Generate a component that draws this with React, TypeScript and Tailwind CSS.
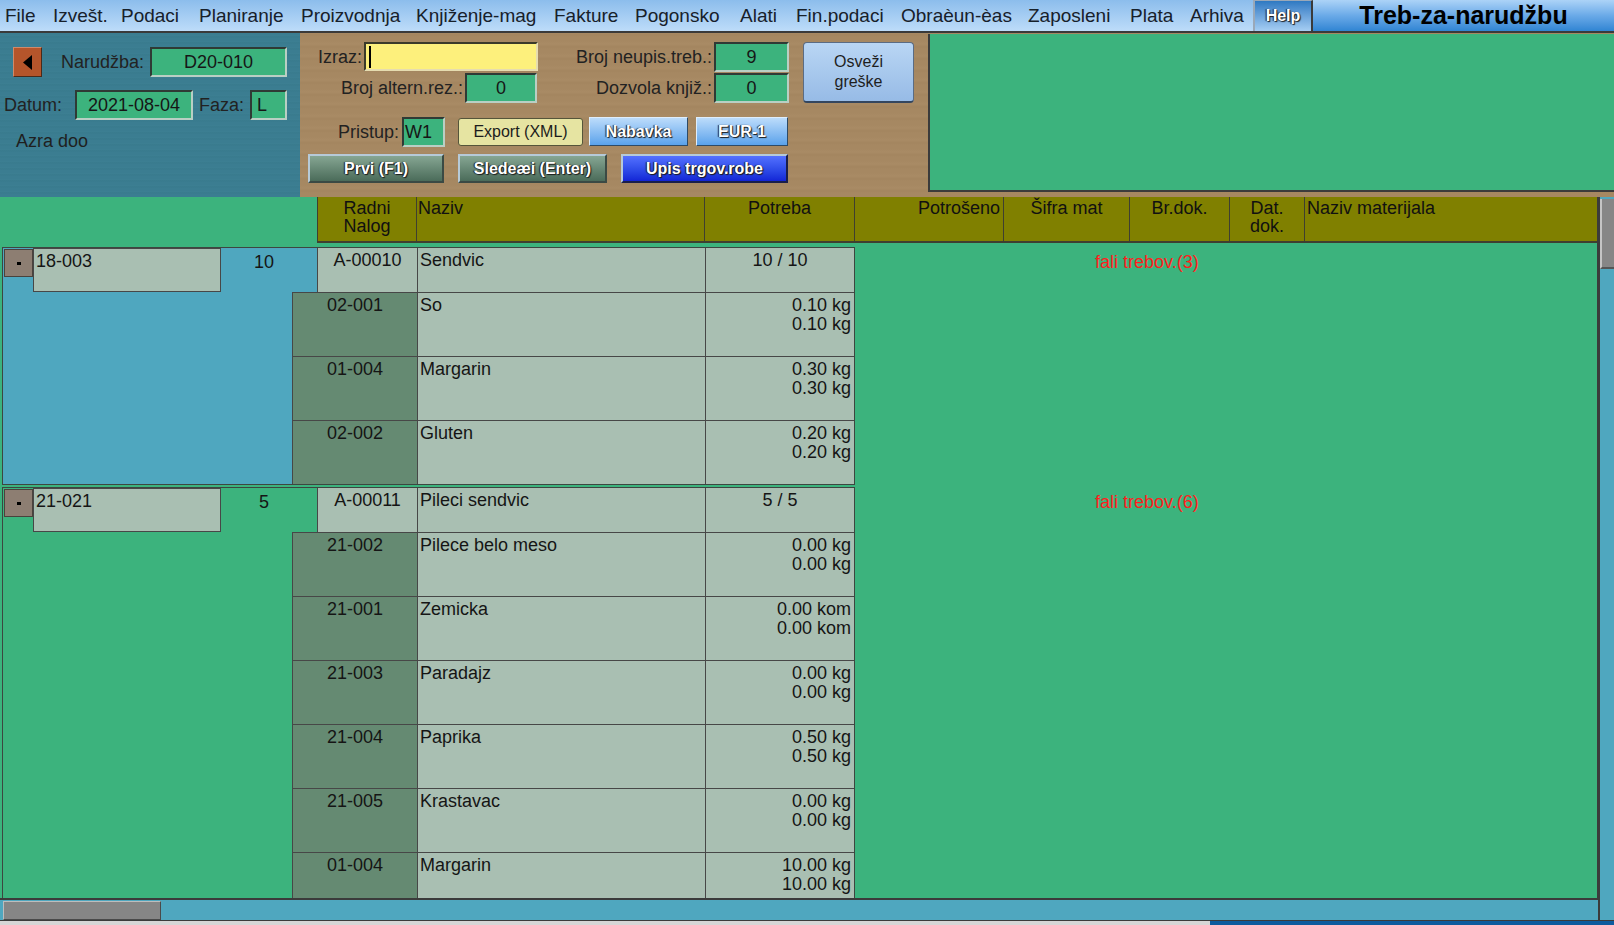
import React from "react";

const menu = [
  { label: "File", w: 48 },
  { label: "Izvešt.", w: 68 },
  { label: "Podaci", w: 78 },
  { label: "Planiranje", w: 102 },
  { label: "Proizvodnja", w: 115 },
  { label: "Knjiženje-mag", w: 138 },
  { label: "Fakture", w: 81 },
  { label: "Pogonsko", w: 105 },
  { label: "Alati", w: 56 },
  { label: "Fin.podaci", w: 105 },
  { label: "Obraèun-èas", w: 127 },
  { label: "Zaposleni", w: 102 },
  { label: "Plata", w: 60 },
  { label: "Arhiva", w: 63 },
];

interface Material {
  code: string;
  name: string;
  qty: string;
}

interface Order {
  id: string;
  qty: string;
  code: string;
  name: string;
  need: string;
  note: string;
  selected: boolean;
  materials: Material[];
}

const orders: Order[] = [
  {
    id: "18-003",
    qty: "10",
    code: "A-00010",
    name: "Sendvic",
    need: "10 / 10",
    note: "fali trebov.(3)",
    selected: true,
    materials: [
      { code: "02-001", name: "So", qty: "0.10 kg" },
      { code: "01-004", name: "Margarin", qty: "0.30 kg" },
      { code: "02-002", name: "Gluten", qty: "0.20 kg" },
    ],
  },
  {
    id: "21-021",
    qty: "5",
    code: "A-00011",
    name: "Pileci sendvic",
    need: "5 / 5",
    note: "fali trebov.(6)",
    selected: false,
    materials: [
      { code: "21-002", name: "Pilece belo meso", qty: "0.00 kg" },
      { code: "21-001", name: "Zemicka", qty: "0.00 kom" },
      { code: "21-003", name: "Paradajz", qty: "0.00 kg" },
      { code: "21-004", name: "Paprika", qty: "0.50 kg" },
      { code: "21-005", name: "Krastavac", qty: "0.00 kg" },
      { code: "01-004", name: "Margarin", qty: "10.00 kg" },
    ],
  },
];

// sunken green field
function Field({ className = "", children }: { className?: string; children?: React.ReactNode }) {
  return (
    <div
      className={`h-[30px] flex items-center bg-[#3cb37d] border-2 border-t-[#2f3a35] border-l-[#2f3a35] border-b-[#b9cfc4] border-r-[#b9cfc4] text-[18px] leading-none text-[#161616] ${className}`}
    >
      {children}
    </div>
  );
}

function Label({ className = "", children }: { className?: string; children: React.ReactNode }) {
  return <span className={`text-[18px] leading-none text-[#222] whitespace-nowrap ${className}`}>{children}</span>;
}

function Header({ className = "", children }: { className?: string; children: React.ReactNode }) {
  return (
    <div className={`h-[46px] bg-[#808000] border-r border-b-2 border-[#3f3f30] pt-[2px] text-[18px] leading-[18px] text-[#111] ${className}`}>
      {children}
    </div>
  );
}

function OrderGroup({ order, first }: { order: Order; first: boolean }) {
  const bg = order.selected ? "bg-[#4fa7bf]" : "bg-[#3cb37d]";
  return (
    <div className={`flex items-start ${first ? "" : "mt-[2px]"}`}>
      <div className={`w-[853px] ml-[2px] border border-[#3d4640] ${bg}`}>
        {/* main row */}
        <div className="flex h-[44px]">
          <div className="w-[30px] pt-[1px] pl-[1px]">
            <div className="w-[29px] h-[28px] bg-[#8d7e72] border border-[#4a423c] flex items-center justify-center">
              <span className="w-[4px] h-[3px] bg-black" />
            </div>
          </div>
          <div className="w-[188px] h-[44px] bg-[#a9bfb2] border border-[#474747] pl-[2px] pt-[3px] text-[18px] leading-[19px] text-[#151515]">
            {order.id}
          </div>
          <div className="w-[96px] pr-[10px] pt-[5px] text-center text-[18px] leading-[19px] text-[#151515]">{order.qty}</div>
          <div className="w-[100px] bg-[#a9bfb2] border-l border-[#474747] pt-[3px] text-center text-[18px] leading-[19px] text-[#151515]">
            {order.code}
          </div>
          <div className="w-[288px] bg-[#a9bfb2] border-l border-[#474747] pl-[2px] pt-[3px] text-[18px] leading-[19px] text-[#151515]">
            {order.name}
          </div>
          <div className="w-[149px] bg-[#a9bfb2] border-l border-[#474747] pt-[3px] text-center text-[18px] leading-[19px] text-[#151515]">
            {order.need}
          </div>
        </div>
        {order.materials.map((m, i) => (
          <div key={m.code + i} className="flex h-[64px]">
            <div className="w-[289px]" />
            <div className="w-[125px] bg-[#658a72] border-l border-t border-[#474747] pt-[3px] text-center text-[18px] leading-[19px] text-[#151515]">
              {m.code}
            </div>
            <div className="w-[288px] bg-[#a9bfb2] border-l border-t border-[#474747] pl-[2px] pt-[3px] text-[18px] leading-[19px] text-[#151515]">
              {m.name}
            </div>
            <div className="w-[149px] bg-[#a9bfb2] border-l border-t border-[#474747] pr-[3px] pt-[3px] text-right text-[18px] leading-[19px] text-[#151515]">
              <div>{m.qty}</div>
              <div>{m.qty}</div>
            </div>
          </div>
        ))}
      </div>
      <div className="pl-[240px] pt-[6px] text-[18px] leading-[19px] text-[#ff1d1d] whitespace-nowrap">{order.note}</div>
    </div>
  );
}

export default function App() {
  const btnShadow = "[text-shadow:1px_1px_1px_#1a1a1a,-1px_0_1px_#1a1a1a]";
  return (
    <div className="w-full h-[925px] overflow-hidden flex flex-col bg-[#3cb37d] font-['Liberation_Sans',Arial,sans-serif]">
      {/* Menu bar */}
      <div className="h-[33px] flex border-b-2 border-[#3a3a3a] shrink-0">
        <div className="flex items-center pl-[5px] w-[1253px] bg-gradient-to-b from-[#8cbdec] to-[#bddcf9]">
          {menu.map(m => (
            <span key={m.label} style={{ width: m.w }} className="text-[19px] leading-none text-[#17202a] whitespace-nowrap">
              {m.label}
            </span>
          ))}
        </div>
        <div className="w-[60px] flex items-center justify-center bg-gradient-to-b from-[#2e79c2] to-[#a6cef3] border-l-2 border-t border-[#9aa8b8] border-r-2 border-r-[#3a3a3a]">
          <span className={`text-[16px] font-bold text-white leading-none ${btnShadow}`}>Help</span>
        </div>
        <div className="flex-1 flex items-center justify-center bg-gradient-to-b from-[#acd3f7] via-[#6aaae8] to-[#2f85d3]">
          <span className="text-[25px] font-bold text-black leading-none">Treb-za-narudžbu</span>
        </div>
      </div>

      {/* Top panel */}
      <div className="h-[164px] flex shrink-0">
        <div className="w-[300px] bg-[#3b7d91] bg-[repeating-linear-gradient(0deg,#3b7d91_0px,#3b7d91_3px,#387a8d_4px,#3d8094_6px)] pt-[14px]">
          <div className="flex items-center h-[30px]">
            <div className="ml-[13px] w-[29px] h-[30px] bg-[#b5552b] border border-t-[#d08a6a] border-l-[#d08a6a] border-b-[#4a2a1a] border-r-[#4a2a1a] flex items-center justify-center">
              <svg width="9" height="15" viewBox="0 0 9 15">
                <polygon points="9,0 9,15 0,7.5" fill="#000" />
              </svg>
            </div>
            <Label className="w-[108px] text-right pr-[6px]">Narudžba:</Label>
            <Field className="w-[137px] justify-center">D20-010</Field>
          </div>
          <div className="flex items-center h-[30px] mt-[13px]">
            <Label className="w-[75px] pl-[4px]">Datum:</Label>
            <Field className="w-[118px] justify-center">2021-08-04</Field>
            <Label className="w-[57px] pl-[6px]">Faza:</Label>
            <Field className="w-[37px] pl-[5px]">L</Field>
          </div>
          <div className="mt-[11px] pl-[16px] text-[18px] leading-[20px] text-[#1f1f1f]">Azra doo</div>
        </div>

        <div className="flex-1 flex bg-[#a68862] bg-[repeating-linear-gradient(0deg,#a68862_0px,#a68862_4px,#a3855f_6px,#a98b65_9px,#a68862_12px)]">
          <div className="w-[489px] flex flex-col pt-[9px]">
            <div className="flex items-center h-[29px]">
              <Label className="w-[64px] text-right pr-[2px]">Izraz:</Label>
              <div className="w-[174px] h-[29px] bg-[#fdf07c] border-2 border-t-[#3a3a2a] border-l-[#3a3a2a] border-b-[#e6dcb0] border-r-[#e6dcb0] flex items-center pl-[3px]">
                <span className="w-[2px] h-[22px] bg-black" />
              </div>
              <Label className="w-[176px] text-right pr-[2px]">Broj neupis.treb.:</Label>
              <Field className="w-[75px] h-[29px] justify-center">9</Field>
            </div>
            <div className="flex items-center h-[29px] mt-[2px]">
              <Label className="w-[165px] text-right pr-[2px]">Broj altern.rez.:</Label>
              <Field className="w-[72px] h-[29px] justify-center">0</Field>
              <Label className="w-[177px] text-right pr-[2px]">Dozvola knjiž.:</Label>
              <Field className="w-[75px] h-[29px] justify-center">0</Field>
            </div>
            <div className="flex items-center h-[29px] mt-[15px]">
              <Label className="w-[102px] text-right pr-[3px]">Pristup:</Label>
              <Field className="w-[43px] h-[29px] pl-[1px]">W1</Field>
              <div className="ml-[13px] w-[125px] h-[28px] rounded-[3px] bg-[#e6e4a2] border border-[#55553a] flex items-center justify-center text-[16px] leading-none text-[#1c1c1c]">
                Export (XML)
              </div>
              <div className={`ml-[6px] w-[99px] h-[29px] bg-gradient-to-b from-[#bcdcfb] to-[#5aa2ea] border border-t-[#dfeefc] border-l-[#dfeefc] border-b-[#2d4a66] border-r-[#2d4a66] flex items-center justify-center text-[16px] font-bold leading-none text-white ${btnShadow}`}>
                Nabavka
              </div>
              <div className={`ml-[8px] w-[92px] h-[29px] bg-gradient-to-b from-[#bcdcfb] to-[#5aa2ea] border border-t-[#dfeefc] border-l-[#dfeefc] border-b-[#2d4a66] border-r-[#2d4a66] flex items-center justify-center text-[16px] font-bold leading-none text-white ${btnShadow}`}>
                EUR-1
              </div>
            </div>
            <div className="flex items-center h-[29px] mt-[8px]">
              <div className={`ml-[8px] w-[136px] h-[29px] bg-gradient-to-b from-[#86a693] to-[#4b6c5a] border-2 border-t-[#b6cad8] border-l-[#b6cad8] border-b-[#3b4a44] border-r-[#3b4a44] flex items-center justify-center text-[16px] font-bold leading-none text-white ${btnShadow}`}>
                Prvi (F1)
              </div>
              <div className={`ml-[14px] w-[149px] h-[29px] bg-gradient-to-b from-[#86a693] to-[#4b6c5a] border-2 border-t-[#b6cad8] border-l-[#b6cad8] border-b-[#3b4a44] border-r-[#3b4a44] flex items-center justify-center text-[16px] font-bold leading-none text-white ${btnShadow}`}>
                Sledeæi (Enter)
              </div>
              <div className={`ml-[14px] w-[167px] h-[29px] bg-gradient-to-b from-[#5470ff] to-[#1424d6] border-2 border-t-[#b6cad8] border-l-[#b6cad8] border-b-[#1a1f4a] border-r-[#1a1f4a] flex items-center justify-center text-[16px] font-bold leading-none text-white ${btnShadow}`}>
                Upis trgov.robe
              </div>
            </div>
          </div>
          <div className="pt-[9px] pl-[14px]">
            <div className="w-[111px] h-[61px] rounded-[4px] bg-gradient-to-b from-[#b9d6f4] to-[#97bbe6] border border-[#5a6c84] border-b-2 border-b-[#34465e] flex flex-col items-center justify-center text-[16px] leading-[20px] text-[#1e1e1e]">
              <span>Osveži</span>
              <span>greške</span>
            </div>
          </div>
          <div className="ml-[14px] flex-1 mt-[1px] h-[158px] bg-[#3cb37d] border-l-2 border-b-2 border-[#3b3b3b]" />
        </div>
      </div>

      {/* Table area */}
      <div className="h-[723px] flex shrink-0">
        <div className="w-[1598px] flex flex-col">
          <div className="h-[701px] overflow-hidden bg-[#3cb37d] border-r border-[#3b3b3b]">
            <div className="flex">
              <div className="w-[317px] h-[46px]" />
              <Header className="w-[100px] border-l text-center">
                Radni
                <br />
                Nalog
              </Header>
              <Header className="w-[288px] pl-[1px]">Naziv</Header>
              <Header className="w-[150px] text-center">Potreba</Header>
              <Header className="w-[149px] text-right pr-[3px]">Potrošeno</Header>
              <Header className="w-[126px] text-center">Šifra mat</Header>
              <Header className="w-[100px] text-center">Br.dok.</Header>
              <Header className="w-[75px] text-center">
                Dat.
                <br />
                dok.
              </Header>
              <Header className="flex-1 pl-[2px] border-r-0">Naziv materijala</Header>
            </div>
            <div className="pt-[4px]">
              {orders.map((o, i) => (
                <OrderGroup key={o.id} order={o} first={i === 0} />
              ))}
            </div>
          </div>
          {/* horizontal scrollbar */}
          <div className="h-[22px] bg-[#4fa7bf] border-t-2 border-[#3b3b3b] pt-[1px] pl-[3px]">
            <div className="w-[158px] h-[19px] bg-[#868686] border border-t-[#bdbdbd] border-l-[#bdbdbd] border-b-[#4a4a4a] border-r-[#4a4a4a]" />
          </div>
        </div>
        {/* vertical scrollbar */}
        <div className="flex-1 bg-[#4fa7bf] border-l-2 border-[#3b3b3b] pt-[2px]">
          <div className="h-[70px] bg-[#868686] border-l-2 border-[#c4c4c4] border-b-2 border-b-[#555]" />
        </div>
      </div>

      {/* bottom strip */}
      <div className="flex-1 flex border-t border-[#3b3b3b]">
        <div className="w-[1210px] bg-[#d6d6d6]" />
        <div className="flex-1 bg-[#0d5b9e]" />
      </div>
    </div>
  );
}
